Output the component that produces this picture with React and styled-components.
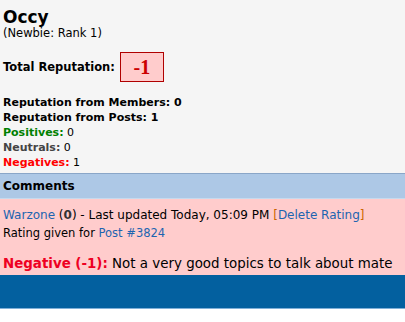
import React from "react"
import styled, { createGlobalStyle } from "styled-components"

const GlobalStyle = createGlobalStyle`
    html, body {
        margin: 0;
        padding: 0;
        background: #ffffff;
    }
    body {
        font-family: Verdana, "DejaVu Sans", sans-serif;
        font-size: 11px;
        color: #000000;
    }
`

const Page = styled.div`
    width: 405px;
    height: 322px;
    overflow: hidden;
    display: flex;
    flex-direction: column;
`

const Summary = styled.div`
    background: #f5f5f5;
    padding: 7px 3px 0;
    height: 173px;
    box-sizing: border-box;
    flex-shrink: 0;
`

const UserName = styled.div`
    font-size: 17px;
    font-weight: bold;
    line-height: 20px;
`

const Rank = styled.div`
    font-size: 11.5px;
    line-height: 13px;
`

const TotalRow = styled.div`
    display: flex;
    align-items: center;
    gap: 5px;
    margin-top: 12px;
    font-weight: bold;
    font-size: 11.5px;
`

const TotalBox = styled.div`
    width: 42px;
    height: 28px;
    background: #ffcccc;
    border: 1px solid #b00000;
    color: #cc0000;
    font-family: "Liberation Serif", serif;
    font-weight: bold;
    font-size: 20px;
    display: flex;
    align-items: center;
    justify-content: center;
`

const Stats = styled.div`
    margin-top: 13px;
`

const StatLine = styled.div`
    line-height: 15px;
`

const StatLabel = styled.span`
    font-weight: bold;
    color: ${p => p.$color || "#000000"};
`

const CommentsHeader = styled.div`
    height: 24px;
    flex-shrink: 0;
    background: #adc8e6;
    border-top: 1px solid #8aa6c8;
    border-bottom: 1px solid #c6daee;
    padding: 0 3px;
    display: flex;
    align-items: center;
    font-weight: bold;
    font-size: 12px;
`

const CommentBody = styled.div`
    background: #ffcccc;
    height: 76px;
    flex-shrink: 0;
    padding: 7px 3px 0;
    box-sizing: border-box;
`

const CommentLine = styled.div`
    line-height: 18px;
    font-size: ${p => p.$size || 12}px;
`

const Link = styled.a`
    color: #1d64b0;
    text-decoration: none;
`

const Count = styled.span`
    font-weight: bold;
    color: #333333;
`

const Bracket = styled.span`
    color: #cc6600;
`

const Verdict = styled.div`
    margin-top: 14px;
    font-size: 13.4px;
    line-height: 16px;
`

const NegLabel = styled.span`
    color: #ee0022;
    font-weight: bold;
`

const FooterBar = styled.div`
    height: 33px;
    flex-shrink: 0;
    background: #03609f;
    border-bottom: 1px solid #7fb0d8;
`

const App = () => {
    return (
        <Page>
            <GlobalStyle />
            <Summary>
                <UserName>Occy</UserName>
                <Rank>(Newbie: Rank 1)</Rank>

                <TotalRow>
                    <span>Total Reputation:</span>
                    <TotalBox>-1</TotalBox>
                </TotalRow>

                <Stats>
                    <StatLine><StatLabel>Reputation from Members: 0</StatLabel></StatLine>
                    <StatLine><StatLabel>Reputation from Posts: 1</StatLabel></StatLine>
                    <StatLine><StatLabel $color="#008000">Positives:</StatLabel> 0</StatLine>
                    <StatLine><StatLabel $color="#444444">Neutrals:</StatLabel> 0</StatLine>
                    <StatLine><StatLabel $color="#ff0000">Negatives:</StatLabel> 1</StatLine>
                </Stats>
            </Summary>

            <CommentsHeader>Comments</CommentsHeader>

            <CommentBody>
                <CommentLine>
                    <Link href="#">Warzone</Link> (<Count>0</Count>) - Last updated Today, 05:09 PM <Bracket>[</Bracket><Link href="#">Delete Rating</Link><Bracket>]</Bracket>
                </CommentLine>
                <CommentLine $size={11.5}>
                    Rating given for <Link href="#">Post #3824</Link>
                </CommentLine>
                <Verdict>
                    <NegLabel>Negative (-1):</NegLabel> Not a very good topics to talk about mate
                </Verdict>
            </CommentBody>

            <FooterBar />
        </Page>
    )
}

export default App
